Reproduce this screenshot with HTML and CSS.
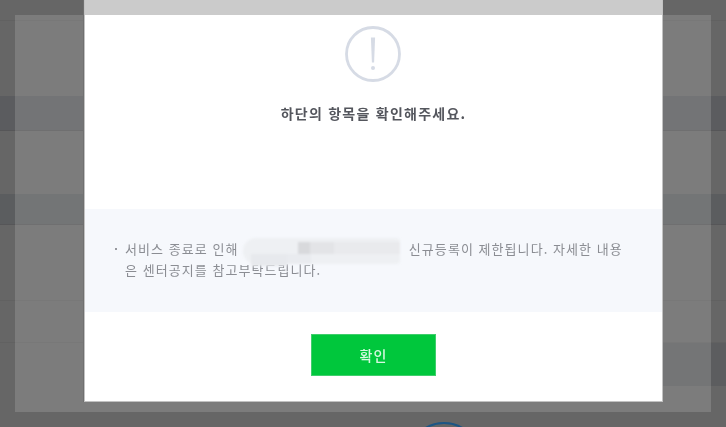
FILE: index.html
```html
<!DOCTYPE html>
<html lang="ko">
<head>
<meta charset="utf-8">
<title>확인</title>
<link rel="stylesheet" href="styles.css">
</head>
<body>
<main class="page">
  <div class="row r1"></div>
  <div class="row r2"></div>
  <div class="row r3"></div>
  <div class="row r4"></div>
  <div class="row r5"></div>
  <div class="row r6"></div>
  <div class="row r7"><div class="r7-band"></div></div>
  <div class="seal-clip"><div class="seal"></div></div>
</main>
<div class="panel"></div>
<section class="modal">
  <div class="modal-top"></div>
  <div class="modal-head">
    <svg class="alert" width="58" height="58" viewBox="0 0 58 58" aria-hidden="true">
      <circle cx="29" cy="29" r="26.5" fill="none" stroke="#d6dbe5" stroke-width="2.8"/>
      <path d="M26.9 12.5h4.2l-1 25h-2.2z" fill="#d6dbe5"/>
      <circle cx="29" cy="43" r="2" fill="#d6dbe5"/>
    </svg>
    <h1 class="title">하단의 항목을 확인해주세요.</h1>
  </div>
  <div class="notice">
    <p class="notice-text"><span class="dot"></span>서비스 종료로 인해 <span class="mosaic"><i class="m a"></i><i class="m b"></i><i class="m c"></i><i class="m d"></i><i class="m e"></i><i class="m f"></i></span> 신규등록이 제한됩니다. 자세한 내용은 센터공지를 참고부탁드립니다.</p>
  </div>
  <div class="actions">
    <button class="confirm" type="button">확인</button>
  </div>
</section>
</body>
</html>
```
FILE: styles.css
```css
* { box-sizing: border-box; }
html, body { margin: 0; height: 100%; overflow: hidden; }
body {
  position: relative;
  width: 726px;
  height: 427px;
  background: #666;
  font-family: "Noto Sans CJK KR", "Noto Sans", sans-serif;
}
.page { position: relative; height: 427px; display: flex; flex-direction: column; }
.row { flex: none; border-bottom: 1px solid #616161; }
.r1 { height: 96px; border-bottom: 0; box-shadow: inset 0 -75px 0 #666, inset 0 -76px 0 #616161; }
.r2 { height: 35px; background: #5b5c5f; border-bottom-color: #565658; }
.r3 { height: 63px; border-bottom: 0; }
.r4 { height: 31px; background: #5b5d5f; border-bottom-color: #565658; }
.r5 { height: 76px; }
.r6 { height: 42px; }
.r7 { height: 43px; border-bottom: 0; display: flex; justify-content: flex-end; }
.r7-band { width: 100px; background: #5c5d5f; }
.seal-clip {
  position: absolute; left: 407px; top: 422px;
  width: 74px; height: 5px; overflow: hidden;
}
.seal {
  width: 74px; height: 74px;
  border: 2px solid #1d5685; border-radius: 50%;
}
.panel {
  position: absolute; left: 15px; top: 15px;
  width: 696px; height: 397px;
  background: rgba(255, 255, 255, 0.15);
}
.modal {
  position: absolute; left: 84px; top: 0;
  width: 579px; height: 402px;
  background: #fff;
  border: 1px solid #c2c2c2;
  border-top: 0;
  box-shadow: -1px 0 0 #707070;
  display: flex; flex-direction: column;
}
.modal-top { height: 15px; background: #cbcbcb; flex: none; }
.modal-head { height: 194px; flex: none; display: flex; flex-direction: column; align-items: center; padding-top: 10px; }
.alert { display: block; margin-right: 2px; }
.title {
  margin: 20px 0 0;
  font-size: 14px; line-height: 20px; font-weight: 700;
  color: #54565d; letter-spacing: 1.25px;
  filter: blur(0.4px);
}
.notice { height: 103px; flex: none; background: #f6f8fc; padding: 29px 37px 0 40px; }
.notice-text {
  position: relative;
  margin: 0;
  font-size: 13px; line-height: 21px;
  color: #8b8d93; letter-spacing: 1.05px;
  filter: blur(0.4px);
}
.dot {
  position: absolute; left: -10px; top: 10px;
  width: 2px; height: 2px; background: #77797f; border-radius: 50%;
}
.mosaic {
  position: relative; display: inline-block;
  width: 161px; height: 14px; vertical-align: -2px;
  filter: blur(0.8px);
}
.m { position: absolute; display: block; }
.a { left: 0; top: -4px; width: 157px; height: 26px; background: #eef0f3; border-radius: 13px 4px 4px 13px; }
.b { left: 55px; top: 0; width: 12px; height: 12px; background: #d8d9dc; }
.c { left: 67px; top: 0; width: 24px; height: 12px; background: #e3e4e7; }
.d { left: 8px; top: 12px; width: 36px; height: 12px; background: #e7e9ed; }
.e { left: 91px; top: 0; width: 66px; height: 12px; background: #e9eaed; }
.f { left: 44px; top: 12px; width: 24px; height: 10px; background: #e9ebef; }
.actions { flex: 1; display: flex; justify-content: center; padding-top: 22px; }
.confirm {
  width: 125px; height: 42px;
  background: #00c73c; border: 1px solid #3fce6c;
  color: #d6f8e1; font: 500 14px/20px "Noto Sans CJK KR", sans-serif;
  letter-spacing: 1px; padding: 0;
  filter: blur(0.3px);
}
```
